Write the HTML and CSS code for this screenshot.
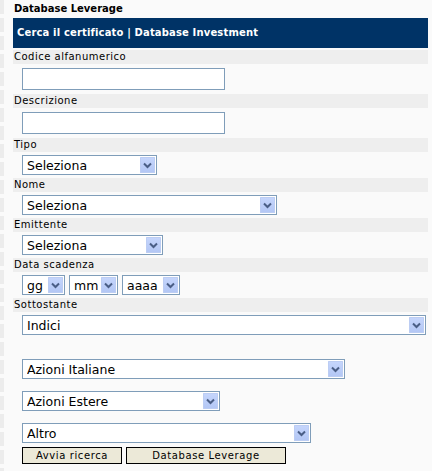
FILE: index.html
```html
<!DOCTYPE html>
<html lang="it">
<head>
<meta charset="utf-8">
<title>Database Leverage</title>
<link rel="stylesheet" href="styles.css">
</head>
<body>
<div class="page">
  <div class="strip"></div>
  <div class="main">
    <div class="title">Database Leverage</div>
    <div class="navbar">Cerca il certificato | Database Investment</div>

    <div class="label first">Codice alfanumerico</div>
    <div class="field pad4"><input class="txt" type="text"></div>

    <div class="label">Descrizione</div>
    <div class="field pad4"><input class="txt" type="text"></div>

    <div class="label">Tipo</div>
    <div class="field"><div class="sel w-tipo"><span>Seleziona</span><i class="arr"><svg width="15" height="16" viewBox="0 0 15 16"><path d="M4 6.5 L7.5 10 L11 6.5" fill="none" stroke="#4a5e86" stroke-width="2"/></svg></i></div></div>

    <div class="label">Nome</div>
    <div class="field"><div class="sel w-nome"><span>Seleziona</span><i class="arr"><svg width="15" height="16" viewBox="0 0 15 16"><path d="M4 6.5 L7.5 10 L11 6.5" fill="none" stroke="#4a5e86" stroke-width="2"/></svg></i></div></div>

    <div class="label">Emittente</div>
    <div class="field"><div class="sel w-emit"><span>Seleziona</span><i class="arr"><svg width="15" height="16" viewBox="0 0 15 16"><path d="M4 6.5 L7.5 10 L11 6.5" fill="none" stroke="#4a5e86" stroke-width="2"/></svg></i></div></div>

    <div class="label">Data scadenza</div>
    <div class="field row">
      <div class="sel w-gg"><span>gg</span><i class="arr"><svg width="15" height="16" viewBox="0 0 15 16"><path d="M4 6.5 L7.5 10 L11 6.5" fill="none" stroke="#4a5e86" stroke-width="2"/></svg></i></div>
      <div class="sel w-mm"><span>mm</span><i class="arr"><svg width="15" height="16" viewBox="0 0 15 16"><path d="M4 6.5 L7.5 10 L11 6.5" fill="none" stroke="#4a5e86" stroke-width="2"/></svg></i></div>
      <div class="sel w-aaaa"><span>aaaa</span><i class="arr"><svg width="15" height="16" viewBox="0 0 15 16"><path d="M4 6.5 L7.5 10 L11 6.5" fill="none" stroke="#4a5e86" stroke-width="2"/></svg></i></div>
    </div>

    <div class="label">Sottostante</div>
    <div class="field stack">
      <div class="sel w-indici"><span>Indici</span><i class="arr"><svg width="15" height="16" viewBox="0 0 15 16"><path d="M4 6.5 L7.5 10 L11 6.5" fill="none" stroke="#4a5e86" stroke-width="2"/></svg></i></div>
      <div class="sel w-ita gap24"><span>Azioni Italiane</span><i class="arr"><svg width="15" height="16" viewBox="0 0 15 16"><path d="M4 6.5 L7.5 10 L11 6.5" fill="none" stroke="#4a5e86" stroke-width="2"/></svg></i></div>
      <div class="sel w-est gap12"><span>Azioni Estere</span><i class="arr"><svg width="15" height="16" viewBox="0 0 15 16"><path d="M4 6.5 L7.5 10 L11 6.5" fill="none" stroke="#4a5e86" stroke-width="2"/></svg></i></div>
      <div class="sel w-altro gap12"><span>Altro</span><i class="arr"><svg width="15" height="16" viewBox="0 0 15 16"><path d="M4 6.5 L7.5 10 L11 6.5" fill="none" stroke="#4a5e86" stroke-width="2"/></svg></i></div>
      <div class="buttons">
        <button class="btn w-avvia" type="button">Avvia ricerca</button>
        <button class="btn w-dbl" type="button">Database Leverage</button>
      </div>
    </div>
  </div>
</div>
</body>
</html>
```
FILE: styles.css
```css
* { box-sizing: border-box; }
html, body { margin: 0; padding: 0; background: #fafafa; }
body { font-family: "DejaVu Sans", Verdana, sans-serif; color: #000; }

.page { display: flex; align-items: flex-start; }
.strip {
  width: 4px;
  height: 471px;
  margin-right: 9px;
  background: repeating-linear-gradient(to bottom, #ececec 0 14px, transparent 14px 18px);
}
.main { width: 415px; }

.title {
  height: 18px;
  line-height: 18px;
  font-size: 10px;
  font-weight: bold;
  padding-left: 1px;
}
.navbar {
  height: 30px;
  line-height: 30px;
  background: #003366;
  color: #fff;
  font-size: 10px;
  font-weight: bold;
  letter-spacing: 0.15px;
  padding-left: 4px;
  margin-bottom: 2px;
}

.label {
  height: 14px;
  line-height: 14px;
  background: #eeeeee;
  font-size: 10px;
  letter-spacing: 0.5px;
  padding-left: 1px;
}

.field { padding: 3px 0 3px 9px; }
.field.pad4 { padding: 4px 0 4px 9px; }
.field.row { display: flex; gap: 4px; }
.field.stack { display: flex; flex-direction: column; align-items: flex-start; }

.txt {
  display: block;
  width: 203px;
  height: 22px;
  border: 1px solid #7f9db9;
  background: #fff;
  margin: 0;
  padding: 0;
}

.sel {
  display: flex;
  align-items: center;
  height: 20px;
  border: 1px solid #7f9db9;
  background: #fff;
  font-size: 12.5px;
  padding-left: 4px;
}
.sel span { flex: 1; white-space: nowrap; overflow: hidden; }
.arr {
  display: block;
  width: 15px;
  height: 16px;
  margin-right: 1px;
  border-radius: 1px;
  background: linear-gradient(to bottom, #c6d6fc, #b2c6f4);
  box-shadow: inset 0 0 0 1px #bccdf3;
}
.arr svg { display: block; }

.w-tipo { width: 135px; }
.w-nome { width: 255px; }
.w-emit { width: 141px; }
.w-gg { width: 43px; }
.w-mm { width: 49px; }
.w-aaaa { width: 58px; }
.w-indici { width: 404px; }
.w-ita { width: 323px; }
.w-est { width: 198px; }
.w-altro { width: 289px; }

.gap24 { margin-top: 24px; }
.gap12 { margin-top: 12px; }

.buttons { display: flex; gap: 4px; margin-top: 4px; }
.btn {
  height: 17px;
  margin: 0;
  padding: 0;
  border: 1px solid #000;
  background: #ece9d8;
  font-family: "DejaVu Sans", Verdana, sans-serif;
  font-size: 10px;
  letter-spacing: 0.6px;
  color: #000;
  line-height: 15px;
}
.w-avvia { width: 100px; }
.w-dbl { width: 160px; }
```
